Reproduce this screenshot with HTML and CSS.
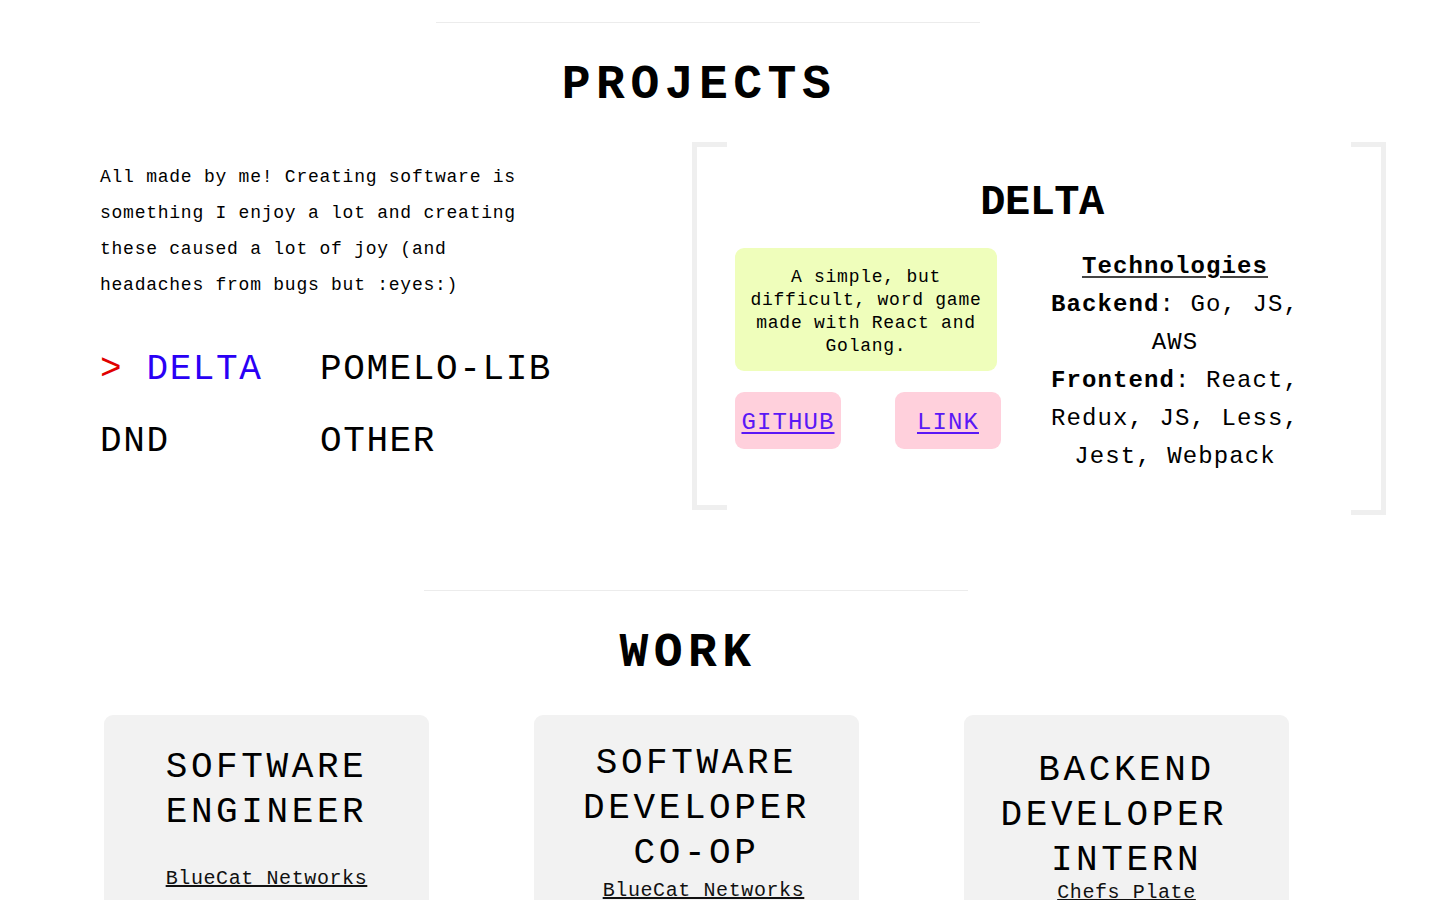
FILE: index.html
```html
<!DOCTYPE html>
<html lang="en">
<head>
<meta charset="utf-8">
<title>Projects &amp; Work</title>
<link rel="stylesheet" href="styles.css">
</head>
<body>
<section class="projects">
  <hr class="rule rule--projects">
  <h2 class="title title--projects">PROJECTS</h2>
  <div class="projects-body">
    <div class="intro">
      <p class="intro-text">All made by me! Creating software is something I enjoy a lot and creating these caused a lot of joy (and headaches from bugs but :eyes:)</p>
      <ul class="project-list">
        <li class="project-item project-item--active"><span class="caret">&gt;</span> DELTA</li>
        <li class="project-item">POMELO-LIB</li>
        <li class="project-item">DND</li>
        <li class="project-item">OTHER</li>
      </ul>
    </div>
    <div class="showcase">
      <h3 class="showcase-title">DELTA</h3>
      <div class="showcase-cols">
        <div class="showcase-left">
          <p class="desc">A simple, but difficult, word game made with React and Golang.</p>
          <div class="links">
            <a class="link-btn" href="#">GITHUB</a>
            <a class="link-btn" href="#">LINK</a>
          </div>
        </div>
        <div class="tech">
          <div class="tech-head">Technologies</div>
          <div class="tech-line"><b>Backend</b>: Go, JS, AWS</div>
          <div class="tech-line"><b>Frontend</b>: React, Redux, JS, Less, Jest, Webpack</div>
        </div>
      </div>
    </div>
  </div>
</section>

<section class="work">
  <hr class="rule rule--work">
  <h2 class="title title--work">WORK</h2>
  <div class="cards">
    <div class="card card--one">
      <div class="card-title">SOFTWARE<br>ENGINEER</div>
      <a class="card-company" href="#">BlueCat Networks</a>
    </div>
    <div class="card card--two">
      <div class="card-title">SOFTWARE<br>DEVELOPER<br>CO-OP</div>
      <a class="card-company" href="#">BlueCat Networks</a>
    </div>
    <div class="card card--three">
      <div class="card-title">BACKEND<br>DEVELOPER&nbsp;<br>INTERN</div>
      <a class="card-company" href="#">Chefs Plate</a>
    </div>
  </div>
</section>
</body>
</html>
```

FILE: styles.css
```css
*, *::before, *::after { box-sizing: border-box; }

html, body {
  margin: 0;
  padding: 0;
  background: #ffffff;
  color: #000000;
  font-family: "Liberation Mono", "DejaVu Sans Mono", monospace;
}

.rule {
  display: block;
  height: 0;
  border: 0;
  border-top: 1px solid #ececec;
  width: 544px;
  margin-bottom: 0;
}
.rule--projects { margin: 22px 0 0 436px; }
.rule--work { margin: 80px 0 0 424px; }

.title {
  margin: 38px 0 0;
  font-size: 48px;
  line-height: 48px;
  font-weight: 700;
  letter-spacing: 5.5px;
  text-align: center;
}
.title--projects { padding-right: 42px; }
.title--work { padding-right: 64px; }

.projects-body {
  display: flex;
  margin-top: 33px;
}

.intro {
  width: 692px;
  padding-left: 100px;
}

.intro-text {
  margin: 17px 0 0;
  max-width: 440px;
  font-size: 18px;
  line-height: 36px;
  letter-spacing: 0.75px;
}

.project-list {
  list-style: none;
  margin: 31px 0 0;
  padding: 0;
  display: grid;
  grid-template-columns: 220px auto;
  font-size: 36px;
  line-height: 72px;
  letter-spacing: 1.6px;
}
.project-item { white-space: nowrap; }
.project-item--active { color: #2a00f5; }
.caret { color: #e00000; }

.showcase {
  position: relative;
  width: 694px;
  padding: 40px 0 34px;
}
.showcase::before,
.showcase::after {
  content: "";
  position: absolute;
  top: 0;
  width: 35px;
  border: 5px solid #efefef;
}
.showcase::before {
  left: 0;
  bottom: 0;
  border-right: 0;
}
.showcase::after {
  right: 0;
  bottom: -5px;
  border-left: 0;
}

.showcase-title {
  margin: 0;
  padding-left: 6px;
  font-size: 42px;
  line-height: 42px;
  font-weight: 700;
  letter-spacing: -0.5px;
  text-align: center;
}

.showcase-cols {
  display: flex;
  align-items: flex-start;
  gap: 39px;
  margin-top: 22px;
  padding-left: 43px;
}

.showcase-left {
  width: 266px;
  margin-top: 2px;
}

.desc {
  margin: 0;
  width: 262px;
  padding: 18px 14px 13px;
  background: #effebb;
  border-radius: 9px;
  font-size: 18px;
  line-height: 23px;
  letter-spacing: 0.75px;
  text-align: center;
}

.links {
  display: flex;
  justify-content: space-between;
  margin-top: 21px;
}

.link-btn {
  display: flex;
  align-items: center;
  justify-content: center;
  width: 106px;
  height: 57px;
  padding-top: 3px;
  background: #ffd0dc;
  border-radius: 9px;
  color: #5a18f6;
  font-size: 24px;
  letter-spacing: 1.1px;
  text-decoration: underline;
  text-underline-offset: 3px;
}

.tech {
  width: 270px;
  margin-top: 2px;
  font-size: 24px;
  line-height: 38px;
  letter-spacing: 1.1px;
  text-align: center;
}
.tech-head {
  font-weight: 700;
  text-decoration: underline;
  text-decoration-color: #444;
  text-underline-offset: 3px;
}
.tech-line b { font-weight: 700; }

.cards {
  display: flex;
  gap: 105px;
  margin-top: 38px;
  padding-left: 104px;
}

.card {
  width: 325px;
  height: 260px;
  background: #f2f2f2;
  border-radius: 9px;
  text-align: center;
}
.card--one { padding-top: 30px; }
.card--two { padding-top: 26px; }
.card--three { padding-top: 33px; }

.card-title {
  font-size: 36px;
  line-height: 45px;
  letter-spacing: 3.6px;
}

.card-company {
  display: inline-block;
  color: #111;
  font-size: 20px;
  line-height: 24px;
  letter-spacing: 0.6px;
  text-decoration: underline;
  text-underline-offset: 1px;
}
.card--one .card-company { margin-top: 32px; }
.card--two .card-company { margin-top: 3px; margin-left: 14px; }
.card--three .card-company { margin-top: -2px; }
```
